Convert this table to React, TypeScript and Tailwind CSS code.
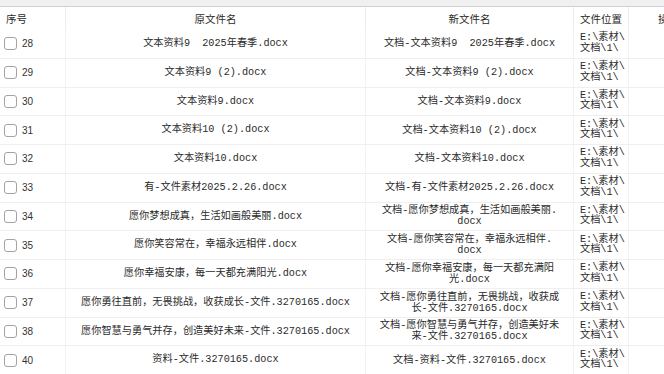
import React from "react";

type Row = { n: number; o: string; nw: string[] };

const rows: Row[] = [
  { n: 28, o: "文本资料9  2025年春季.docx", nw: ["文档-文本资料9  2025年春季.docx"] },
  { n: 29, o: "文本资料9 (2).docx", nw: ["文档-文本资料9 (2).docx"] },
  { n: 30, o: "文本资料9.docx", nw: ["文档-文本资料9.docx"] },
  { n: 31, o: "文本资料10 (2).docx", nw: ["文档-文本资料10 (2).docx"] },
  { n: 32, o: "文本资料10.docx", nw: ["文档-文本资料10.docx"] },
  { n: 33, o: "有-文件素材2025.2.26.docx", nw: ["文档-有-文件素材2025.2.26.docx"] },
  { n: 34, o: "愿你梦想成真，生活如画般美丽.docx", nw: ["文档-愿你梦想成真，生活如画般美丽.", "docx"] },
  { n: 35, o: "愿你笑容常在，幸福永远相伴.docx", nw: ["文档-愿你笑容常在，幸福永远相伴.", "docx"] },
  { n: 36, o: "愿你幸福安康，每一天都充满阳光.docx", nw: ["文档-愿你幸福安康，每一天都充满阳", "光.docx"] },
  { n: 37, o: "愿你勇往直前，无畏挑战，收获成长-文件.3270165.docx", nw: ["文档-愿你勇往直前，无畏挑战，收获成", "长-文件.3270165.docx"] },
  { n: 38, o: "愿你智慧与勇气并存，创造美好未来-文件.3270165.docx", nw: ["文档-愿你智慧与勇气并存，创造美好未", "来-文件.3270165.docx"] },
  { n: 40, o: "资料-文件.3270165.docx", nw: ["文档-资料-文件.3270165.docx"] },
];

const bodyFont = "font-['Liberation_Mono','Noto_Sans_CJK_SC',monospace]";
const headFont = "font-['Noto_Sans_CJK_SC','Liberation_Sans',sans-serif]";

export default function App() {
  return (
    <div className="w-[664px] h-[374px] overflow-hidden bg-white text-[#2b2b2b]">
      <div className="h-[7px] bg-[#f0f0f0] border-b border-[#cfcfd6]" />
      <div className="w-[760px]">
        {/* header */}
        <div className={`grid grid-cols-[66px_300px_208px_55px_131px] h-[23px] text-[10.5px] ${headFont}`}>
          <div className="flex items-center pl-[6px] border-r border-[#ececec]">序号</div>
          <div className="flex items-center justify-center border-r border-[#ececec]">原文件名</div>
          <div className="flex items-center justify-center border-r border-[#ececec]">新文件名</div>
          <div className="flex items-center justify-center border-r border-[#ececec] whitespace-nowrap">文件位置</div>
          <div className="flex items-center pl-[29px] whitespace-nowrap">操作</div>
        </div>
        {/* body */}
        {rows.map((r) => (
          <div
            key={r.n}
            className="grid grid-cols-[66px_300px_208px_55px_131px] h-[28.75px] border-b border-[#efefef]"
          >
            <div className="flex items-center pl-[4px] border-r border-[#f2f2f2]">
              <span className="w-[13px] h-[13px] rounded-[3px] border border-[#a3a3a3] bg-white shrink-0" />
              <span className="ml-[5px] text-[10px] text-[#333] font-['Liberation_Sans',sans-serif]">{r.n}</span>
            </div>
            <div className={`flex items-center justify-center border-r border-[#f2f2f2] text-[10.2px] whitespace-pre ${bodyFont}`}>
              {r.o}
            </div>
            <div className={`flex flex-col items-center justify-center border-r border-[#f2f2f2] text-[10.2px] leading-[11px] ${bodyFont}`}>
              {r.nw.map((l, i) => (
                <span key={i} className="whitespace-pre">{l}</span>
              ))}
            </div>
            <div className={`flex flex-col justify-center pl-[6px] border-r border-[#f2f2f2] text-[10.2px] leading-[10.5px] overflow-hidden ${bodyFont}`}>
              <span className="whitespace-nowrap">E:\素材\</span>
              <span className="whitespace-nowrap">文档\1\</span>
            </div>
            <div />
          </div>
        ))}
      </div>
    </div>
  );
}
